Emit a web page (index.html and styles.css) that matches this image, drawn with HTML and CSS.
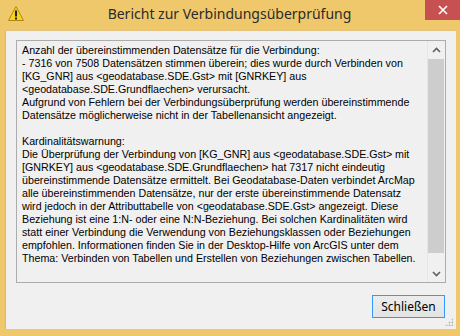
FILE: index.html
```html
<!DOCTYPE html>
<html>
  <head>
    <title>Bericht zur Verbindungsüberprüfung</title>
    <link rel="stylesheet" href="styles.css">
  </head>
  <body>
    <div class="window">
      <div class="titlebar">
        <svg class="title-icon" width="16" height="15" viewBox="0 0 16 15">
          <path d="M8 0.5 L15.5 14.5 L0.5 14.5 Z" fill="#f7d21e" stroke="#b08a10" stroke-width="1" stroke-linejoin="round" />
          <rect x="7" y="4.5" width="2" height="6" fill="#222" />
          <rect x="7" y="11.5" width="2" height="2" fill="#222" />
        </svg>
        <div class="title">Bericht zur Verbindungsüberprüfung</div>
        <div class="close-btn">
          <svg width="10" height="10" viewBox="0 0 10 10">
            <path d="M1 1 L9 9 M9 1 L1 9" stroke="#fff" stroke-width="1.6" />
          </svg>
        </div>
      </div>

      <div class="content">
        <div class="report-box">
          <div class="report-text">
            Anzahl der übereinstimmenden Datensätze für die Verbindung:<br>
            - 7316 von 7508 Datensätzen stimmen überein; dies wurde durch Verbinden von<br>
            [KG_GNR] aus &lt;geodatabase.SDE.Gst&gt; mit [GNRKEY] aus<br>
            &lt;geodatabase.SDE.Grundflaechen&gt; verursacht.<br>
            Aufgrund von Fehlern bei der Verbindungsüberprüfung werden übereinstimmende<br>
            Datensätze möglicherweise nicht in der Tabellenansicht angezeigt.<br>
            <br>
            Kardinalitätswarnung:<br>
            Die Überprüfung der Verbindung von [KG_GNR] aus &lt;geodatabase.SDE.Gst&gt; mit<br>
            [GNRKEY] aus &lt;geodatabase.SDE.Grundflaechen&gt; hat 7317 nicht eindeutig<br>
            übereinstimmende Datensätze ermittelt. Bei Geodatabase-Daten verbindet ArcMap<br>
            alle übereinstimmenden Datensätze, nur der erste übereinstimmende Datensatz<br>
            wird jedoch in der Attributtabelle von &lt;geodatabase.SDE.Gst&gt; angezeigt. Diese<br>
            Beziehung ist eine 1:N- oder eine N:N-Beziehung. Bei solchen Kardinalitäten wird<br>
            statt einer Verbindung die Verwendung von Beziehungsklassen oder Beziehungen<br>
            empfohlen. Informationen finden Sie in der Desktop-Hilfe von ArcGIS unter dem<br>
            Thema: Verbinden von Tabellen und Erstellen von Beziehungen zwischen Tabellen.
          </div>
          <div class="scrollbar">
            <div class="scroll-arrow">
              <svg width="9" height="6" viewBox="0 0 9 6">
                <path d="M1 5 L4.5 1.5 L8 5" fill="none" stroke="#606060" stroke-width="1.6" />
              </svg>
            </div>
            <div class="scroll-track">
              <div class="scroll-thumb"></div>
            </div>
            <div class="scroll-arrow">
              <svg width="9" height="6" viewBox="0 0 9 6">
                <path d="M1 1 L4.5 4.5 L8 1" fill="none" stroke="#606060" stroke-width="1.6" />
              </svg>
            </div>
          </div>
        </div>

        <div class="button-row">
          <button class="close-button">Schließen</button>
        </div>

        <div class="grip"></div>
      </div>
    </div>
  </body>
</html>
```

FILE: styles.css
```css
html,
body {
  margin: 0;
  padding: 0;
}

body {
  width: 460px;
  height: 336px;
  overflow: hidden;
  background-color: #f0c86c;
  font-family: "Noto Sans", sans-serif;
}

.window {
  display: flex;
  flex-direction: column;
  height: 336px;
}

.titlebar {
  display: flex;
  align-items: flex-start;
  height: 30px;
}

.title-icon {
  margin: 6px 0 0 8px;
}

.title {
  flex: 1;
  text-align: center;
  font-size: 14px;
  color: #2b2b2b;
  padding-top: 4px;
  padding-left: 10px;
}

.close-btn {
  width: 35px;
  height: 20px;
  background-color: #c75050;
  display: flex;
  align-items: center;
  justify-content: center;
}

.content {
  position: relative;
  flex: 1;
  margin: 0 4px 7px 5px;
  background-color: #f0f0f0;
  border-top: 1px solid #e2c27c;
  border-left: 1px solid #dbb96b;
  padding: 9px 10px 0 10px;
  display: flex;
  flex-direction: column;
}

.report-box {
  display: flex;
  height: 241px;
  border: 1px solid #acacac;
  background-color: #f0f0f0;
}

.report-text {
  flex: 1;
  padding: 3px 0 0 5px;
  font-family: "Liberation Sans", sans-serif;
  font-size: 10.7px;
  line-height: 13px;
  color: #000;
  white-space: nowrap;
  overflow: hidden;
}

.scrollbar {
  width: 17px;
  display: flex;
  flex-direction: column;
  border-left: 1px solid #e6e6e6;
}

.scroll-arrow {
  height: 17px;
  display: flex;
  align-items: center;
  justify-content: center;
}

.scroll-track {
  flex: 1;
  padding: 1px 1px 12px 0;
}

.scroll-thumb {
  height: 194px;
  background-color: #cdcdcd;
}

.button-row {
  display: flex;
  justify-content: flex-end;
  margin-top: 12px;
  padding-right: 1px;
}

.close-button {
  width: 73px;
  height: 23px;
  border: 1px solid #3399ff;
  background: linear-gradient(#ececec, #e3e3e3);
  font-family: "Noto Sans", sans-serif;
  font-size: 12px;
  color: #000;
  padding: 0;
}

.grip {
  position: absolute;
  right: 3px;
  bottom: 3px;
  width: 8px;
  height: 8px;
  background-image: radial-gradient(#b8b8b8 45%, transparent 50%);
  background-size: 3px 3px;
  clip-path: polygon(100% 0, 100% 100%, 0 100%);
}
```
